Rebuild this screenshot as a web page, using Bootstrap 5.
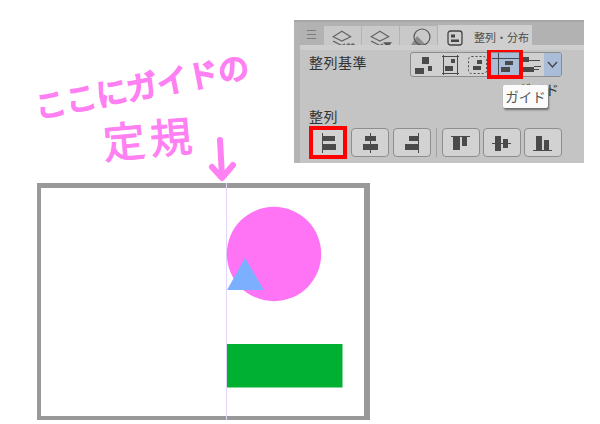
<!DOCTYPE html>
<html lang="ja">
<head>
  <meta charset="UTF-8" />
  <title>整列・分布</title>
  <link href="https://cdn.jsdelivr.net/npm/bootstrap@5.3.3/dist/css/bootstrap.min.css" rel="stylesheet" />
  <style>
    body { margin: 0; background: #fff; font-family: "Noto Sans CJK JP", "Liberation Sans", sans-serif; }
    .stage { position: relative; width: 600px; height: 424px; overflow: hidden; }
    svg { display: block; }

    /* handwritten note */
    .scrawl { position: absolute; color: #ff80f2; line-height: 1; white-space: nowrap; transform-origin: left center; }
    .scrawl-a { left: 35px; top: 90px; font-size: 31px; -webkit-text-stroke: 2px #ff80f2; transform: rotate(-11deg); }
    .scrawl-b { left: 103px; top: 120px; font-size: 42px; letter-spacing: 5px; -webkit-text-stroke: 1px #ff80f2; transform: rotate(-5deg); }
    .arrow-mark { position: absolute; left: 205px; top: 135px; }

    /* canvas */
    .sheet { position: absolute; left: 37px; top: 183px; width: 333px; height: 237px; border-style: solid; border-color: #999; border-width: 5px 6px 4px 4px; background: #fff; }

    /* panel */
    .tool-panel { position: absolute; left: 294px; top: 20px; width: 290px; height: 143px; background: #b4b4b4; border-top: 2px solid #a6a6a6; padding-left: 6px; color: #333; }
    .tab-strip { height: 23px; background: #b2b2b2; align-items: flex-end; }
    .menu-tab { width: 24px; height: 23px; padding: 7px 0 0 6px; }
    .side-tab { width: 37px; height: 19px; margin-right: 1px; background: #c9c9c9; overflow: hidden; }
    .front-tab { width: 94px; height: 25px; margin-bottom: -5px; background: #cfcfcf; z-index: 1; padding-left: 9px; gap: 11px; font-size: 11px; color: #4a4a4a; }
    .panel-body { height: 118px; background: #c4c4c4; border-top: 5px solid #cecece; padding: 2px 22px 0 9px; }
    .field-label { font-size: 14px; letter-spacing: .5px; line-height: 20px; }
    .seg-group { width: 152px; height: 25px; border: 1px solid #8c8c8c; border-radius: 3px; background: #d0d0d0; overflow: hidden; }
    .seg-group .btn { padding: 0; border: 0; border-radius: 0; background: transparent; }
    .seg-group .seg-on { background: #a9bdd8; }
    .hint-line { height: 29px; font-size: 14px; line-height: 18px; padding-top: 3px; text-align: right; color: #333; margin-right: 3px; }
    .label-gap { margin-bottom: 2px; }
    .align-btn { width: 38px; height: 29px; padding: 0; background: #d2d2d2; border: 1px solid #8e8e8e; border-radius: 4px; }
    .align-sep { width: 1px; height: 29px; background: #a2a2a2; margin: 0 5px; }
    .tight-row { gap: 3px; }

    .red-box { position: absolute; border: 4px solid #fe0000; }
    .red-guide { left: 487px; top: 48px; width: 36px; height: 31px; }
    .red-left { left: 309px; top: 126px; width: 38px; height: 33px; }
    .guide-tip { position: absolute; left: 503px; top: 85px; width: 45px; height: 23px; background: #fbfbfb; border-radius: 2px; box-shadow: 1px 2px 2px rgba(0,0,0,.45); font-size: 13.5px; line-height: 22px; text-align: center; color: #555; }
  </style>
</head>
<body>

<div class="stage">

  <div class="scrawl scrawl-a">ここにガイドの</div>
  <div class="scrawl scrawl-b">定規</div>
  <svg class="arrow-mark" width="34" height="48" viewBox="205 135 34 48" fill="none" stroke="#ff80f2" stroke-width="6" stroke-linecap="round" stroke-linejoin="round">
    <path d="M220 140 222 177M212 167 222 178 233 165" />
  </svg>

  <div class="sheet">
    <svg width="323" height="228" viewBox="41 188 323 228" style="overflow:visible">
      <line x1="226.5" y1="183" x2="226.5" y2="420" stroke="#e2d4fb" />
      <circle cx="274" cy="254" r="47.2" fill="#ff73f5" />
      <polygon points="227,290 245,258 264,290" fill="#7cb0ff" />
      <rect x="227" y="344" width="115.500" height="43.500" fill="#00b033" />
    </svg>
  </div>

  <div class="tool-panel">
    <div class="tab-strip d-flex">
      <div class="menu-tab">
        <svg width="12" height="11" stroke="#7c7c7c"><path d="M1 1.500H10M1 5.500H10M1 9.500H10" /></svg>
      </div>
      <div class="side-tab d-flex justify-content-center pt-1">
        <svg width="24" height="19" viewBox="0 0 22 17" fill="none" stroke="#666" stroke-width="1.100"><path d="M2 6 10 1 18 6 10 10ZM2 10 10 14 13 12.500M2 14 10 18 13 16.500" /><circle cx="16" cy="14" r="1.400" fill="#666" /><circle cx="20" cy="14" r="1.400" fill="#666" /></svg>
      </div>
      <div class="side-tab d-flex justify-content-center pt-1">
        <svg width="24" height="19" viewBox="0 0 22 17" fill="none" stroke="#666" stroke-width="1.100"><path d="M2 6 10 1 18 6 10 10ZM2 10 10 14 13 12.500M2 14 10 18" /><path d="M13 11H21L17 16Z" fill="#555" stroke="none" /></svg>
      </div>
      <div class="side-tab d-flex justify-content-center">
        <svg width="30" height="19" fill="none" stroke="#555" stroke-width="1.200"><path d="M7 19 13 10 21 18 14 19Z" fill="#8a8a8a" stroke="none" /><circle cx="18" cy="11" r="8" /></svg>
      </div>
      <div class="front-tab d-flex align-items-center">
        <svg width="16" height="16" fill="none" stroke="#444" stroke-width="1.300"><rect x="1" y="1" width="14" height="14" rx="2.500" /><path d="M4 4.500H8V7.500H4ZM4 9.500H12V12H4Z" fill="#444" stroke="none" /></svg>
        <span>整列・分布</span>
      </div>
    </div>

    <div class="panel-body">
      <div class="d-flex justify-content-between">
        <div class="field-label mt-0">整列基準</div>
        <div class="seg-group btn-group" role="group">
          <button class="btn" style="width:27px">
            <svg class="mx-auto" width="27" height="23" fill="#4a4a4a"><path d="M11 4H18V11H11ZM17 13H21V18H17ZM4 15H13V21H4Z" /></svg>
          </button>
          <button class="btn" style="width:27px">
            <svg class="mx-auto" width="27" height="23" fill="#4a4a4a"><path d="M4 3.500H21M4 20.500H21M5.500 2V22M19.500 2V22" stroke="#4a4a4a" fill="none" /><path d="M13 6H17V10H13ZM7 13H15V18H7Z" /></svg>
          </button>
          <button class="btn" style="width:27px">
            <svg class="mx-auto" width="27" height="23" fill="#4a4a4a"><rect x="4.500" y="3.500" width="18" height="17" rx="3" fill="none" stroke="#4a4a4a" stroke-dasharray="2 2" /><path d="M13 7H18V11H13ZM9 13H17V17H9Z" /></svg>
          </button>
          <button class="btn seg-on" style="width:31px">
            <svg class="mx-auto" width="31" height="23" fill="#4a4a4a"><path d="M1 5.500H28M7.500 0V23" stroke="#4a4a4a" fill="none" /><path d="M14 8H22V12H14ZM10 14H19V19H10Z" /></svg>
          </button>
          <button class="btn" style="width:23px">
            <svg class="mx-auto" width="23" height="23" fill="#4a4a4a"><path d="M1 4H8V9H1ZM1 14H13V19H1Z" /><path d="M8 7.500H19M13 13.500H20M13 16.500H18" stroke="#4a4a4a" fill="none" /></svg>
          </button>
          <button class="btn seg-on" style="width:17px">
            <svg class="mx-auto" width="13" height="23" fill="none" stroke="#444" stroke-width="1.300"><path d="M2 9 6.500 14 11 9" /></svg>
          </button>
        </div>
      </div>

      <div class="hint-line">ガイド</div>
      <div class="field-label label-gap">整列</div>

      <div class="d-flex">
        <div class="d-flex gap-1">
          <button class="align-btn">
            <svg class="mx-auto" width="22" height="22" fill="#4a4a4a"><path d="M5.500 1V21" stroke="#4a4a4a" fill="none" /><path d="M6 4H18V9H6ZM6 12H19V18H6Z" /></svg>
          </button>
          <button class="align-btn">
            <svg class="mx-auto" width="22" height="22" fill="#4a4a4a"><path d="M11.500 1V21" stroke="#4a4a4a" fill="none" /><path d="M6 4H17V9H6ZM4 12H19V18H4Z" /></svg>
          </button>
          <button class="align-btn">
            <svg class="mx-auto" width="22" height="22" fill="#4a4a4a"><path d="M17.500 1V21" stroke="#4a4a4a" fill="none" /><path d="M8 4H17V9H8ZM4 12H17V18H4Z" /></svg>
          </button>
        </div>
        <div class="align-sep"></div>
        <div class="d-flex tight-row">
          <button class="align-btn">
            <svg class="mx-auto" width="22" height="22" fill="#4a4a4a"><path d="M1 4.500H20" stroke="#4a4a4a" fill="none" /><path d="M3 5H10V18H3ZM12 5H17V14H12Z" /></svg>
          </button>
          <button class="align-btn">
            <svg class="mx-auto" width="22" height="22" fill="#4a4a4a"><path d="M1 11.500H20" stroke="#4a4a4a" fill="none" /><path d="M4 4H10V19H4ZM12 7H17V16H12Z" /></svg>
          </button>
          <button class="align-btn">
            <svg class="mx-auto" width="22" height="22" fill="#4a4a4a"><path d="M1 18.500H20" stroke="#4a4a4a" fill="none" /><path d="M4 4H10V18H4ZM12 8H17V18H12Z" /></svg>
          </button>
        </div>
      </div>
    </div>
  </div>

  <div class="red-box red-guide"></div>
  <div class="red-box red-left"></div>
  <div class="guide-tip">ガイド</div>

</div>

<script src="https://cdn.jsdelivr.net/npm/bootstrap@5.3.3/dist/js/bootstrap.bundle.min.js"></script>
</body>
</html>
